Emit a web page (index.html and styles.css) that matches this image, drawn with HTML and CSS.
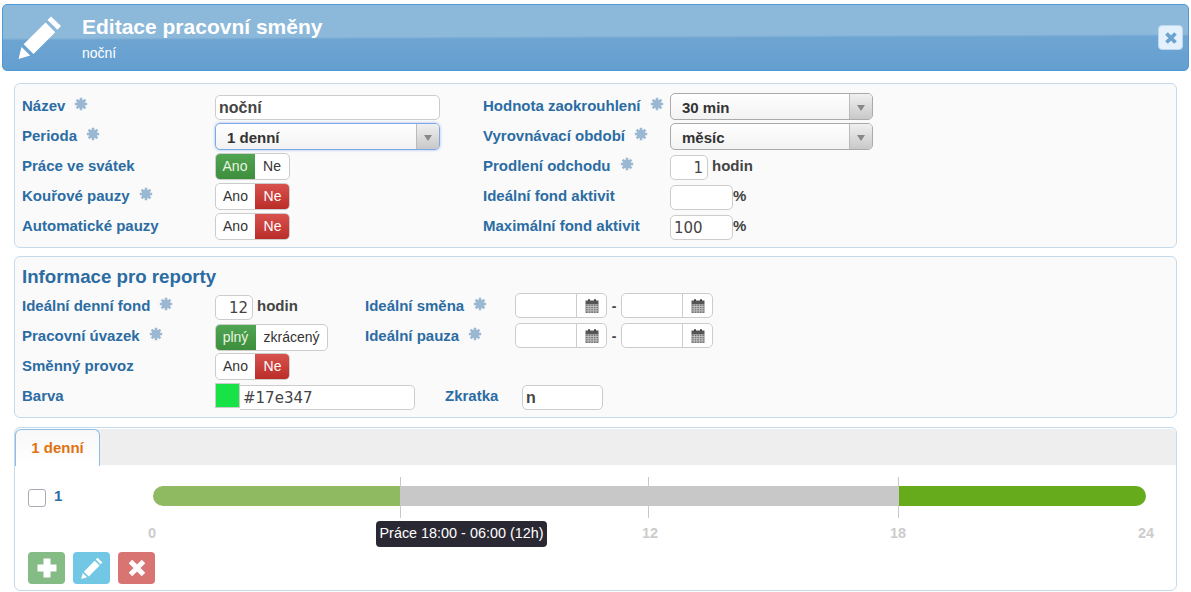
FILE: index.html
```html
<!DOCTYPE html>
<html lang="cs">
<head>
<meta charset="utf-8">
<title>Editace pracovní směny</title>
<link rel="stylesheet" href="styles.css">
</head>
<body>
<svg class="defs" width="0" height="0" aria-hidden="true">
  <defs>
    <symbol id="star" viewBox="0 0 14 14">
      <g stroke="currentColor" stroke-width="2.6">
        <path d="M7 .8V13.2M.8 7H13.200M2.600 2.600L11.400 11.400M11.400 2.600L2.600 11.400"/>
      </g>
      <circle cx="7" cy="7" r="4.300" fill="currentColor"/>
    </symbol>
    <symbol id="cal" viewBox="0 0 14 14">
      <path fill="#555" d="M.5 1.500h13v4H.5z"/>
      <path fill="#444" d="M3 .2h2v2H3zM9 .2h2v2H9z"/>
      <path fill="#777" d="M.5 5.500h13V14H.5z"/>
      <path stroke="#ccc" stroke-width=".8" fill="none" d="M.5 7.500h13M.5 9.700h13M.5 11.900h13M3.200 5.500V14M5.800 5.500V14M8.400 5.500V14M11 5.500V14"/>
    </symbol>
    <symbol id="pencil" viewBox="0 0 44 44">
      <path fill="currentColor" d="M33 1.500l10 9.500-3.600 3.700-9.900-9.700zM27.500 7.500l9.800 9.700L15.500 39 5.700 29.300zM3.500 32l8.700 8.600L.5 44z"/>
    </symbol>
  </defs>
</svg>
<header class="head">
  <svg class="head-icon"><use href="#pencil"/></svg>
  <div class="head-text">
    <h1 class="head-title">Editace pracovní směny</h1>
    <div class="head-sub">noční</div>
  </div>
  <div class="close-btn">
    <svg viewBox="0 0 14 14" width="14" height="14"><path d="M2.500 2.500L11.500 11.500M11.500 2.500L2.500 11.500" stroke="#6ba3d0" stroke-width="3.800"/></svg>
  </div>
</header>

<section class="panel panel-main">
  <div class="col col-left">
    <div class="row"><label class="lbl">Název<svg class="star"><use href="#star"/></svg></label><input class="inp inp-name" value="noční"></div>
    <div class="row"><label class="lbl">Perioda<svg class="star"><use href="#star"/></svg></label>
      <div class="sel sel-period focus"><span class="sel-val">1 denní</span><span class="sel-arrow"></span></div></div>
    <div class="row"><label class="lbl">Práce ve svátek</label>
      <div class="tog"><span class="tog-i w40 green">Ano</span><span class="tog-i w35">Ne</span></div></div>
    <div class="row"><label class="lbl">Kouřové pauzy<svg class="star"><use href="#star"/></svg></label>
      <div class="tog"><span class="tog-i w40">Ano</span><span class="tog-i w35 red">Ne</span></div></div>
    <div class="row"><label class="lbl">Automatické pauzy</label>
      <div class="tog"><span class="tog-i w40">Ano</span><span class="tog-i w35 red">Ne</span></div></div>
  </div>
  <div class="col col-right">
    <div class="row"><label class="lbl">Hodnota zaokrouhlení<svg class="star"><use href="#star"/></svg></label>
      <div class="sel sel-wide"><span class="sel-val">30 min</span><span class="sel-arrow"></span></div></div>
    <div class="row"><label class="lbl">Vyrovnávací období<svg class="star"><use href="#star"/></svg></label>
      <div class="sel sel-wide"><span class="sel-val">měsíc</span><span class="sel-arrow"></span></div></div>
    <div class="row"><label class="lbl">Prodlení odchodu<svg class="star"><use href="#star"/></svg></label>
      <input class="inp inp-num" value="1"><span class="unit">hodin</span></div>
    <div class="row"><label class="lbl">Ideální fond aktivit</label>
      <input class="inp inp-pct" value=""><span class="pct">%</span></div>
    <div class="row"><label class="lbl">Maximální fond aktivit</label>
      <input class="inp inp-pct" value="100"><span class="pct">%</span></div>
  </div>
</section>

<section class="panel panel-info">
  <h2 class="info-title">Informace pro reporty</h2>
  <div class="row"><label class="lbl">Ideální denní fond<svg class="star"><use href="#star"/></svg></label>
    <div class="cell"><input class="inp inp-num" value="12"><span class="unit">hodin</span></div>
    <label class="lbl lbl2">Ideální směna<svg class="star"><use href="#star"/></svg></label>
    <div class="dates">
      <div class="date"><span class="date-in"></span><span class="date-btn"><svg><use href="#cal"/></svg></span></div>
      <span class="dash">-</span>
      <div class="date"><span class="date-in"></span><span class="date-btn"><svg><use href="#cal"/></svg></span></div>
    </div>
  </div>
  <div class="row"><label class="lbl">Pracovní úvazek<svg class="star"><use href="#star"/></svg></label>
    <div class="cell"><div class="tog tog-uvazek"><span class="tog-i w41 green">plný</span><span class="tog-i w72">zkrácený</span></div></div>
    <label class="lbl lbl2">Ideální pauza<svg class="star"><use href="#star"/></svg></label>
    <div class="dates">
      <div class="date"><span class="date-in"></span><span class="date-btn"><svg><use href="#cal"/></svg></span></div>
      <span class="dash">-</span>
      <div class="date"><span class="date-in"></span><span class="date-btn"><svg><use href="#cal"/></svg></span></div>
    </div>
  </div>
  <div class="row"><label class="lbl">Směnný provoz</label>
    <div class="tog"><span class="tog-i w40">Ano</span><span class="tog-i w35 red">Ne</span></div></div>
  <div class="row"><label class="lbl">Barva</label>
    <div class="color"><span class="swatch"></span><input class="color-in" value="#17e347"></div>
    <label class="lbl lbl-short">Zkratka</label>
    <input class="inp inp-short" value="n">
  </div>
</section>

<section class="panel panel-tabs">
  <div class="tabs"><div class="tab">1 denní</div></div>
  <div class="shift">
    <span class="check"></span><span class="shift-no">1</span>
    <div class="timeline">
      <div class="bar">
        <span class="seg seg-a"></span><span class="seg seg-b"></span><span class="seg seg-c"></span>
      </div>
      <span class="tick t6"></span><span class="tick t12"></span><span class="tick t18"></span>
      <span class="num n0">0</span><span class="num n12">12</span><span class="num n18">18</span><span class="num n24">24</span>
      <div class="tip">Práce 18:00 - 06:00 (12h)</div>
    </div>
  </div>
  <div class="actions">
    <span class="act act-add"><svg viewBox="0 0 22 22" width="22" height="22"><path fill="#fff" d="M7.500 1.500h7v6h6v7h-6v6h-7v-6h-6v-7h6z"/></svg></span>
    <span class="act act-edit"><svg width="22" height="22"><use href="#pencil"/></svg></span>
    <span class="act act-del"><svg viewBox="0 0 22 22" width="22" height="22"><path d="M4.500 4.500L17.500 17.500M17.500 4.500L4.500 17.500" stroke="#fff" stroke-width="5"/></svg></span>
  </div>
</section>
</body>
</html>
```

FILE: styles.css
```css
* { box-sizing: border-box; }
html, body { margin: 0; padding: 0; background: #fff; }
body {
  width: 1191px;
  height: 592px;
  overflow: hidden;
  padding: 4px 2px 0;
  font-family: "Liberation Sans", Arial, sans-serif;
  font-size: 14px;
  color: #333;
}
.defs { position: absolute; }

.head {
  position: relative;
  display: flex;
  align-items: flex-start;
  height: 67px;
  border: 1px solid #4d9ad8;
  border-radius: 5px;
  background:
    linear-gradient(179.8deg, #8cb8da 0, #8cb8da 33px, rgba(140, 184, 218, 0) 35.5px),
    linear-gradient(#78aad4, #649fd0);
  color: #fff;
}
.head-icon {
  width: 44px;
  height: 44px;
  margin: 10px 0 0 15px;
  color: #fff;
}
.head-text { margin: 10px 0 0 20px; }
.head-title {
  margin: 0;
  font-size: 21px;
  line-height: 24px;
  font-weight: 700;
}
.head-sub { margin-top: 6px; font-size: 14px; line-height: 16px; }
.close-btn {
  position: absolute;
  left: 1155px;
  top: 20px;
  width: 25px;
  height: 25px;
  display: flex;
  align-items: center;
  justify-content: center;
  border-radius: 4px;
  background: #e4f0fb;
  border: 1px solid #bcd7ee;
}

.panel {
  width: 1163px;
  margin-left: 12px;
  border: 1px solid #c5dbec;
  border-radius: 6px;
  background: #fafafa;
}
.panel-main {
  display: flex;
  height: 165px;
  margin-top: 12px;
  padding: 9px 0 0 7px;
}
.col-left { width: 461px; }
.col-left .lbl { width: 193px; }
.col-right .lbl { width: 187px; }

.row { display: flex; align-items: flex-start; height: 30px; }
.lbl {
  display: flex;
  align-items: center;
  height: 24px;
  font-weight: 700;
  font-size: 15px;
  color: #2b6ca3;
  white-space: nowrap;
}
.star { width: 14px; height: 14px; margin: -2px 0 0 9px; color: #9bb8d3; }

.inp {
  height: 25px;
  margin-top: 2px;
  padding: 0 3px;
  border: 1px solid #ccc;
  border-radius: 5px;
  background: #fff;
  font-family: "DejaVu Sans", sans-serif;
  font-size: 15px;
  color: #444;
  outline: none;
}
.inp-name {
  width: 225px;
  font-family: "Liberation Sans", sans-serif;
  font-weight: 700;
  font-size: 16px;
}
.inp-num { width: 38px; text-align: right; padding-right: 4px; }
.inp-pct { width: 63px; }
.unit {
  margin: 0 0 0 4px;
  line-height: 26px;
  font-size: 15px;
  font-weight: 700;
  color: #444;
}
.pct { line-height: 26px; font-size: 15px; font-weight: 700; color: #444; }

.sel {
  display: flex;
  height: 27px;
  border: 1px solid #aaa;
  border-radius: 5px;
  background: linear-gradient(#fff, #f2f2f2);
  overflow: hidden;
}
.sel-period { width: 225px; }
.sel-wide { width: 203px; }
.sel.focus { border-color: #7ba8e6; box-shadow: 0 0 3px rgba(100, 140, 220, .6); }
.sel-val {
  flex: 1;
  padding-left: 11px;
  line-height: 27px;
  font-size: 15px;
  font-weight: 700;
  color: #333;
}
.sel-arrow {
  position: relative;
  width: 23px;
  border-left: 1px solid #bbb;
  background: linear-gradient(#f0f0f0, #c8c8c8);
}
.sel-arrow::after {
  content: "";
  position: absolute;
  left: 7px;
  top: 11px;
  border: 4px solid transparent;
  border-top: 6px solid #888;
  border-bottom: 0;
}

.tog {
  display: flex;
  height: 27px;
  border: 1px solid #ccc;
  border-radius: 5px;
  background: #fff;
  overflow: hidden;
}
.tog-i {
  display: block;
  line-height: 25px;
  text-align: center;
  color: #333;
}
.tog-uvazek { margin-top: 1px; }
.w40 { width: 39px; }
.w35 { width: 34px; }
.w41 { width: 40px; }
.w72 { width: 71px; }
.green {
  margin: -1px 0 -1px -1px;
  padding-top: 1px;
  width: 40px;
  height: 27px;
  background: linear-gradient(#52a552, #3c8d3c);
  color: #e8f5e0;
}
.w41.green { width: 41px; }
.red {
  margin: -1px -1px -1px 0;
  padding-top: 1px;
  width: 35px;
  height: 27px;
  background: linear-gradient(#d9534f, #b92c28);
  color: #fff;
}

.panel-info {
  height: 162px;
  margin-top: 8px;
  padding: 0 0 0 7px;
}
.info-title {
  margin: 0;
  height: 36px;
  padding-top: 8px;
  font-size: 18.7px;
  line-height: 24px;
  font-weight: 700;
  color: #2b6ca3;
}
.panel-info .lbl { width: 193px; }
.panel-info .lbl2 { width: 150px; }
.cell { display: flex; width: 150px; }
.dates { display: flex; }
.date {
  display: flex;
  width: 92px;
  height: 25px;
  border: 1px solid #ccc;
  border-radius: 5px;
  background: #fff;
}
.date-in { flex: 1; }
.date-btn {
  display: flex;
  align-items: center;
  justify-content: center;
  width: 30px;
  border-left: 1px solid #ccc;
}
.date-btn svg { width: 14px; height: 14px; }
.dash { width: 14px; line-height: 26px; text-align: center; font-weight: 700; color: #444; }

.color { display: flex; align-items: flex-start; width: 200px; }
.swatch { flex: none; width: 25px; height: 25px; background: #17e347; border: 1px solid #ccc; }
.color-in {
  width: 175px;
  height: 25px;
  margin-top: 2px;
  padding: 0 0 0 3px;
  border: 1px solid #ccc;
  border-left: 0;
  border-radius: 0 5px 5px 0;
  font-family: "DejaVu Sans", sans-serif;
  font-size: 15px;
  color: #444;
  background: #fff;
  outline: none;
}
.panel-info .lbl-short { width: 77px; margin-left: 30px; }
.inp-short {
  width: 81px;
  font-family: "Liberation Sans", sans-serif;
  font-weight: 700;
  font-size: 16px;
}

.panel-tabs {
  position: relative;
  height: 164px;
  margin-top: 9px;
  background: #fff;
}
.tabs {
  height: 36px;
  background: #eee;
  border-radius: 5px 5px 0 0;
}
.tab {
  width: 85px;
  height: 37px;
  margin-top: 1px;
  padding-top: 9px;
  text-align: center;
  border: 1px solid #8dbde6;
  border-bottom: 0;
  border-radius: 6px 6px 0 0;
  background: linear-gradient(#f8f8f8, #fff);
  font-size: 15px;
  font-weight: 700;
  color: #e0720f;
}
.shift {
  display: flex;
  align-items: flex-start;
  height: 87px;
  padding: 0 0 0 13px;
}
.check {
  width: 18px;
  height: 18px;
  margin-top: 24px;
  border: 1px solid #aaaab5;
  border-radius: 3px;
  background: #fff;
}
.shift-no {
  margin: 22px 0 0 8px;
  line-height: 18px;
  font-size: 15px;
  font-weight: 700;
  color: #2b6ca3;
}
.timeline {
  position: absolute;
  left: 138px;
  top: 49px;
  width: 993px;
  height: 60px;
}
.bar {
  display: flex;
  position: absolute;
  left: 0;
  right: 0;
  top: 9px;
  height: 20px;
  border-radius: 10px;
  overflow: hidden;
}
.seg { display: block; height: 100%; }
.seg-a { width: 248px; background: #8fba62; }
.seg-b { width: 497px; background: #c8c8c8; }
.seg-c { flex: 1; background: #65ab1c; }
.tick { position: absolute; top: 0; width: 1px; height: 41px; background: #c8c8c8; }
.t6 { left: 247px; }
.t12 { left: 495px; }
.t18 { left: 745px; }
.num {
  position: absolute;
  top: 48px;
  width: 40px;
  margin-left: -20px;
  text-align: center;
  font-weight: 700;
  font-size: 14.5px;
  line-height: 16px;
  color: #ccc;
}
.n0 { left: -1px; }
.n12 { left: 497px; }
.n18 { left: 745px; }
.n24 { left: 993px; }
.tip {
  position: absolute;
  left: 223px;
  top: 44px;
  width: 171px;
  height: 26px;
  border-radius: 4px;
  background: #2a2833;
  color: #fff;
  font-size: 14.4px;
  line-height: 25px;
  text-align: center;
  white-space: nowrap;
}
.actions { display: flex; gap: 8px; padding: 0 0 0 13px; }
.act {
  display: flex;
  align-items: center;
  justify-content: center;
  width: 37px;
  height: 32px;
  border-radius: 4px;
}
.act-add { background: #85bb85; }
.act-edit { background: #72c8e4; color: #fff; }
.act-del { background: #d87573; }
```
